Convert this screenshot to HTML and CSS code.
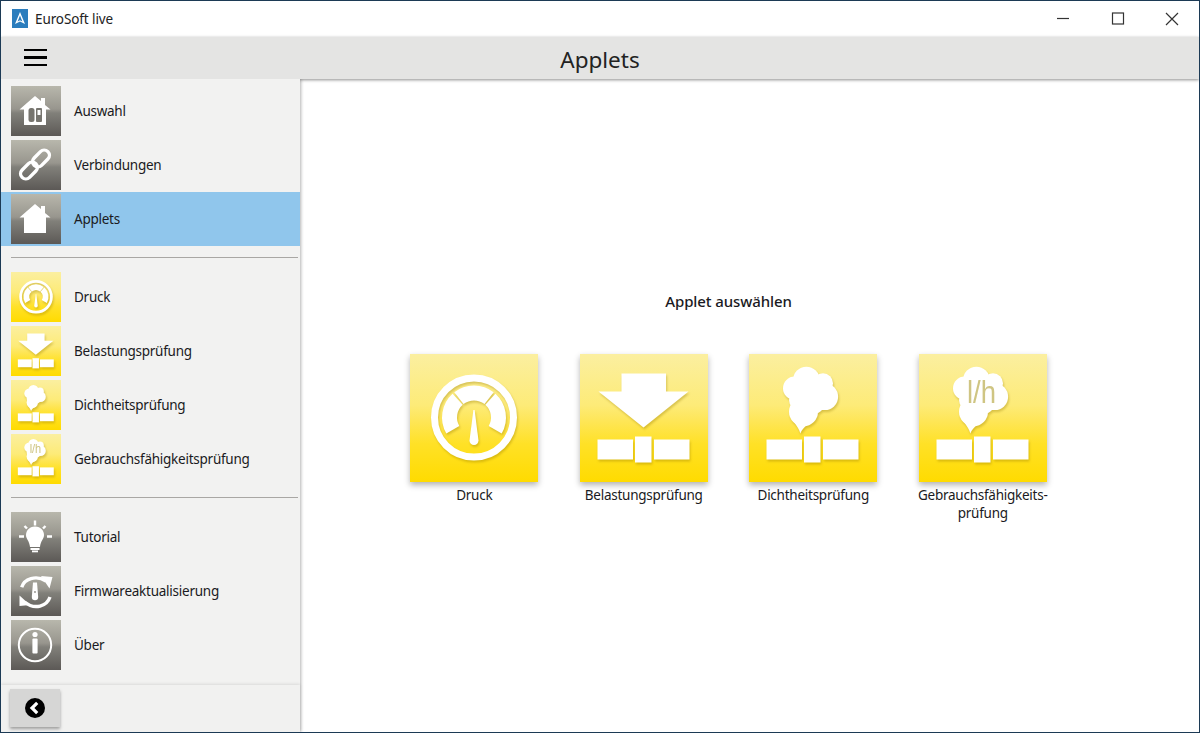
FILE: index.html
```html
<!DOCTYPE html>
<html lang="de">
<head>
<meta charset="utf-8">
<title>EuroSoft live</title>
<link rel="stylesheet" href="styles.css">
</head>
<body>
<svg class="defs" aria-hidden="true">
  <defs>
    <g id="pipe">
      <rect x="17.5" y="85.5" width="35.5" height="20"/>
      <rect x="55" y="82.5" width="16.5" height="26"/>
      <rect x="74" y="85.5" width="35.5" height="20"/>
    </g>
    <g id="cloud">
      <circle cx="57.4" cy="26" r="13.3"/>
      <circle cx="45.7" cy="34.3" r="11.7"/>
      <circle cx="74" cy="29.3" r="10"/>
      <circle cx="75.7" cy="42.7" r="13.4"/>
      <circle cx="60" cy="38" r="16"/>
      <circle cx="54.5" cy="57.7" r="14.5"/>
      <circle cx="65" cy="50" r="10"/>
      <circle cx="50" cy="46" r="10"/>
      <path d="M41 60 C43 68 49 71 51.4 79.5 C53 75 57 72 63 66 Z"/>
    </g>
    <symbol id="i-druck" viewBox="0 0 128 128">
      <circle cx="64" cy="63.5" r="39.5" fill="none" stroke="#fff" stroke-width="7"/>
      <g fill="none" stroke="#fff" stroke-width="15">
        <path d="M42.8 75.75 A24.5 24.5 0 0 1 47.6 45.3"/>
        <path d="M48.9 44.2 A24.5 24.5 0 0 1 79.1 44.2"/>
        <path d="M80.4 45.3 A24.5 24.5 0 0 1 85.2 75.75"/>
      </g>
      <path fill="#fff" d="M63.4 56 H64.6 L68.5 86.5 A4.5 4.5 0 0 1 59.5 86.5 Z"/>
    </symbol>
    <symbol id="i-belastung" viewBox="0 0 128 128">
      <g fill="#fff">
        <path d="M41.5 19.5 H86 V37.5 H108.5 L63.5 73.5 L18.5 37.5 H41.5 Z"/>
        <use href="#pipe"/>
      </g>
    </symbol>
    <symbol id="i-dicht" viewBox="0 0 128 128">
      <g fill="#fff"><use href="#cloud"/><use href="#pipe"/></g>
    </symbol>
    <symbol id="i-gebrauch" viewBox="0 0 128 128">
      <g fill="#fff"><use href="#cloud"/><use href="#pipe"/></g>
      <text x="48" y="48.7" textLength="29" lengthAdjust="spacingAndGlyphs" class="lh">l/h</text>
    </symbol>
    <path id="house" d="M24 10 L30 15 V12 H34 V19 L39.5 23.5 H35 V39 H13 V23.5 H8.5 Z"/>
    <symbol id="i-auswahl" viewBox="0 0 50 50">
      <use href="#house" fill="#fff"/>
      <rect x="17.5" y="22" width="6" height="14" rx="2.5" fill="#77756f"/>
      <rect x="25" y="22" width="6" height="14" rx="1" fill="#77756f"/>
      <rect x="26.5" y="24" width="3" height="5" fill="#fff"/>
    </symbol>
    <symbol id="i-applets" viewBox="0 0 50 50">
      <use href="#house" fill="#fff"/>
    </symbol>
    <symbol id="i-link" viewBox="0 0 50 50">
      <g fill="none" stroke="#fff" stroke-width="3.4" transform="rotate(-45 24 24.5)">
        <rect x="5.8" y="19.25" width="19.4" height="10.5" rx="5.25"/>
        <rect x="22.8" y="19.25" width="19.4" height="10.5" rx="5.25"/>
      </g>
    </symbol>
    <symbol id="i-bulb" viewBox="0 0 50 50">
      <g stroke="#fff" stroke-width="2.4" fill="none">
        <path d="M24 8.5 V13.5 M8 24.5 H13 M36 24.5 H41 M13.5 14 L16 16.5 M34.5 14 L32 16.5"/>
      </g>
      <path fill="#fff" d="M24 14.5 C30 14.5 33 19 33 23 C33 27 29.5 29 29 35 H19 C18.5 29 15 27 15 23 C15 19 18 14.5 24 14.5 Z"/>
      <rect x="19.5" y="36" width="9" height="2" fill="#fff"/>
      <rect x="21" y="38.5" width="6" height="1.8" fill="#fff"/>
    </symbol>
    <symbol id="i-firmware" viewBox="0 0 50 50">
      <g fill="none" stroke="#fff" stroke-width="3.4">
        <path d="M10.7 21.3 C13 13 25 8.5 35 15"/>
        <path d="M39 31 C36 40 24 44.5 13.5 36"/>
      </g>
      <path fill="#fff" d="M30 10 L41.5 11 L38.5 22.5 Z M8.5 29.5 L8.5 40 L19 39 Z"/>
      <path fill="#fff" d="M22 16.5 H26 L27.2 31 A3.2 3.2 0 0 1 20.8 31 Z"/>
      <circle cx="24" cy="26" r="0.9" fill="#8d8b85"/>
    </symbol>
    <symbol id="i-info" viewBox="0 0 50 50">
      <circle cx="24" cy="25" r="16.2" fill="none" stroke="#fff" stroke-width="2"/>
      <circle cx="24" cy="14.5" r="2.6" fill="#fff"/>
      <rect x="21.4" y="18.5" width="5.2" height="15" rx="1" fill="#fff"/>
    </symbol>
    <symbol id="i-back" viewBox="0 0 20 20">
      <circle cx="10" cy="10" r="10" fill="#000"/>
      <path d="M12.2 4.8 L7 10 L12.2 15.2" fill="none" stroke="#fff" stroke-width="3.2"/>
    </symbol>
  </defs>
</svg>

<div class="window">
  <header class="titlebar">
    <svg class="logo" viewBox="0 0 16 19">
      <rect width="16" height="19" fill="#2b7dbd"/>
      <path d="M8 3 L13 15 L8 12.5 L3 15 Z M8 6.5 L5.6 12.5 L8 11.3 L10.4 12.5 Z" fill="#fff" fill-rule="evenodd"/>
    </svg>
    <span class="app-name">EuroSoft live</span>
    <div class="win-controls">
      <svg class="win-btn" viewBox="0 0 54 36"><path d="M20 17.5 H32" stroke="#333" stroke-width="1.2"/></svg>
      <svg class="win-btn" viewBox="0 0 54 36"><rect x="21.5" y="12" width="11" height="11" fill="none" stroke="#333" stroke-width="1.2"/></svg>
      <svg class="win-btn" viewBox="0 0 54 36"><path d="M21 12 L33 24 M33 12 L21 24" stroke="#333" stroke-width="1.2"/></svg>
    </div>
  </header>

  <div class="appbar">
    <button class="burger" aria-label="Menü"><span></span><span></span><span></span></button>
    <h1 class="page-title">Applets</h1>
  </div>

  <div class="body">
    <nav class="sidebar">
      <ul class="nav-group">
        <li class="nav-item"><span class="tile-sm grey"><svg><use href="#i-auswahl"/></svg></span>Auswahl</li>
        <li class="nav-item"><span class="tile-sm grey"><svg><use href="#i-link"/></svg></span>Verbindungen</li>
        <li class="nav-item active"><span class="tile-sm grey"><svg><use href="#i-applets"/></svg></span>Applets</li>
      </ul>
      <hr class="divider">
      <ul class="nav-group">
        <li class="nav-item"><span class="tile-sm yellow"><svg><use href="#i-druck"/></svg></span>Druck</li>
        <li class="nav-item"><span class="tile-sm yellow"><svg><use href="#i-belastung"/></svg></span>Belastungsprüfung</li>
        <li class="nav-item"><span class="tile-sm yellow"><svg><use href="#i-dicht"/></svg></span>Dichtheitsprüfung</li>
        <li class="nav-item"><span class="tile-sm yellow"><svg><use href="#i-gebrauch"/></svg></span>Gebrauchsfähigkeitsprüfung</li>
      </ul>
      <hr class="divider">
      <ul class="nav-group">
        <li class="nav-item"><span class="tile-sm grey"><svg><use href="#i-bulb"/></svg></span>Tutorial</li>
        <li class="nav-item"><span class="tile-sm grey"><svg><use href="#i-firmware"/></svg></span>Firmwareaktualisierung</li>
        <li class="nav-item"><span class="tile-sm grey"><svg><use href="#i-info"/></svg></span>Über</li>
      </ul>
      <div class="side-footer">
        <button class="back" aria-label="Zurück"><svg><use href="#i-back"/></svg></button>
      </div>
    </nav>

    <main class="content">
      <h2 class="heading">Applet auswählen</h2>
      <div class="applets">
        <div class="applet"><span class="tile-lg yellow"><svg><use href="#i-druck"/></svg></span><span class="applet-label">Druck</span></div>
        <div class="applet"><span class="tile-lg yellow"><svg><use href="#i-belastung"/></svg></span><span class="applet-label">Belastungsprüfung</span></div>
        <div class="applet"><span class="tile-lg yellow"><svg><use href="#i-dicht"/></svg></span><span class="applet-label">Dichtheitsprüfung</span></div>
        <div class="applet"><span class="tile-lg yellow"><svg><use href="#i-gebrauch"/></svg></span><span class="applet-label">Gebrauchsfähigkeits-<br>prüfung</span></div>
      </div>
    </main>
  </div>
</div>
</body>
</html>
```
FILE: styles.css
```css
* { box-sizing: border-box; }
html, body { margin: 0; height: 100%; }
body {
  font-family: "Noto Sans", "Open Sans", sans-serif;
  color: #1a1a22;
  background: #fff;
  overflow: hidden;
}
.defs { width: 0; height: 0; display: block; overflow: hidden; }
.window {
  width: 1200px;
  height: 733px;
  border: 1px solid #1c3a55;
  display: flex;
  flex-direction: column;
  overflow: hidden;
}
.titlebar {
  height: 36px;
  flex: none;
  display: flex;
  align-items: center;
  background: #fff;
  padding-left: 11px;
}
.logo { width: 16px; height: 19px; margin-right: 7px; margin-top: -1px; }
.app-name { font-size: 13.5px; letter-spacing: -.1px; color: #222; margin-top: -1px; }
.win-controls { margin-left: auto; display: flex; }
.win-btn { width: 54px; height: 36px; }

.appbar {
  height: 42px;
  flex: none;
  position: relative;
  display: flex;
  align-items: center;
  justify-content: center;
  background: #e4e4e3;
  box-shadow: 0 1px 3px rgba(0,0,0,.45);
  z-index: 1;
}
.burger {
  position: absolute;
  left: 23px;
  top: 12px;
  width: 23px;
  height: 17px;
  padding: 0;
  border: 0;
  background: none;
  display: flex;
  flex-direction: column;
  justify-content: space-between;
}
.burger span { display: block; height: 2.4px; background: #000; }
.page-title {
  margin: 2px 0 0;
  font-size: 22.5px;
  font-weight: 400;
  color: #222;
}

.body { flex: 1; display: flex; min-height: 0; }
.sidebar {
  width: 299px;
  flex: none;
  display: flex;
  flex-direction: column;
  background: #f2f2f1;
  padding-top: 5px;
  box-shadow: 1px 0 3px rgba(0,0,0,.3);
  clip-path: inset(0 -6px 0 0);
  position: relative;
  z-index: 2;
}
.nav-group { list-style: none; margin: 0; padding: 0; }
.nav-item {
  height: 54px;
  display: flex;
  align-items: center;
  padding-left: 10px;
  font-size: 13.5px;
  letter-spacing: -.25px;
}
.nav-item.active { background: #90c6ec; }
.tile-sm {
  width: 50px;
  height: 50px;
  margin-right: 13px;
  flex: none;
}
.tile-sm svg { width: 50px; height: 50px; display: block; }
.grey {
  background: linear-gradient(#b8b7ac 0%, #98968e 46%, #81807a 54%, #5c5956 100%);
}
.yellow {
  background: linear-gradient(#fbefa0 0%, #fdeb78 40%, #fee658 52%, #ffe127 70%, #ffdb00 100%);
}
.yellow svg { filter: drop-shadow(1px 2px 1px rgba(150,120,0,.35)); }
.divider {
  margin: 11px 2px 12px 10px;
  border: 0;
  height: 1px;
  background: #a9a7a4;
}
.side-footer {
  margin-top: auto;
  height: 47px;
  padding: 4px 9px;
  background: #f1f1f0;
  box-shadow: 0 -1px 3px rgba(0,0,0,.1);
}
.back {
  width: 50px;
  height: 38px;
  padding: 0;
  border: 0;
  background: #d6d6d5;
  box-shadow: 0 2px 3px rgba(0,0,0,.35);
  display: flex;
  align-items: center;
  justify-content: center;
}
.back svg { width: 20px; height: 20px; display: block; }

.content {
  flex: 1;
  display: flex;
  flex-direction: column;
  align-items: center;
  padding: 212px 42px 0 0;
  background: #fff;
}
.heading {
  margin: 0 0 43px;
  font-size: 15px;
  line-height: 20px;
  font-weight: 500;
  letter-spacing: -.1px;
}
.applets { display: flex; }
.applet {
  width: 169.5px;
  display: flex;
  flex-direction: column;
  align-items: center;
  text-align: center;
}
.tile-lg {
  width: 128px;
  height: 128px;
  display: block;
  box-shadow: 0 3px 6px rgba(0,0,0,.3);
}
.tile-lg svg { width: 128px; height: 128px; display: block; }
.applet-label {
  margin-top: 4px;
  font-size: 13.5px;
  line-height: 18px;
  letter-spacing: -.25px;
}
.lh { font-family: "Liberation Sans", sans-serif; font-size: 31px; fill: #cfc583; }
```
